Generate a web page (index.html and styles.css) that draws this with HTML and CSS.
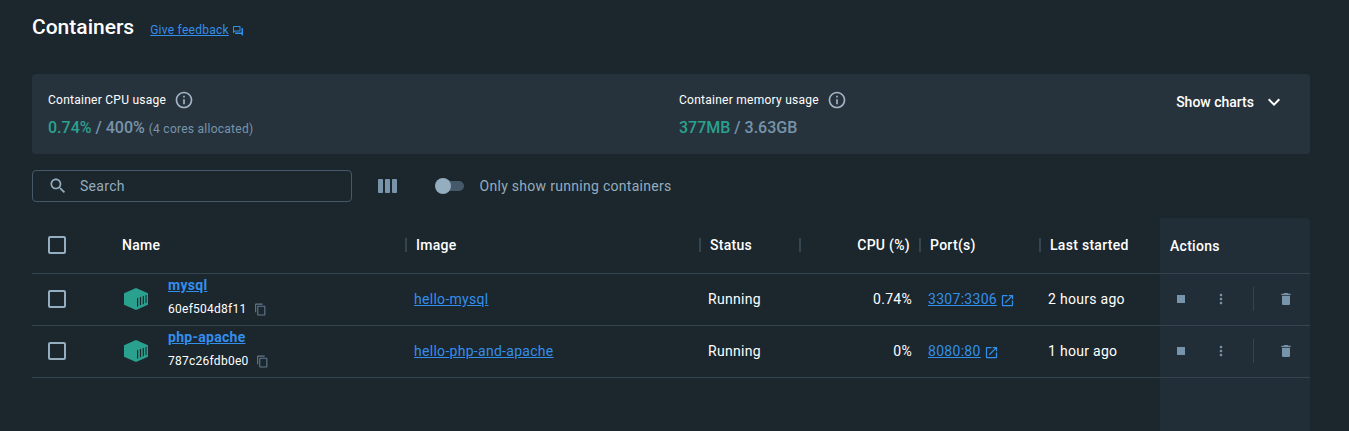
FILE: index.html
```
<!DOCTYPE html>
<html lang="en">
<head>
<meta charset="utf-8">
<title>Containers</title>
<link rel="stylesheet" href="styles.css">
</head>
<body>
<svg class="defs" width="0" height="0" aria-hidden="true">
  <symbol id="info" viewBox="0 0 24 24"><path d="M11 7h2v2h-2zm0 4h2v6h-2zm1-9C6.480 2 2 6.480 2 12s4.480 10 10 10 10-4.480 10-10S17.520 2 12 2zm0 18c-4.410 0-8-3.590-8-8s3.590-8 8-8 8 3.590 8 8-3.590 8-8 8z"/></symbol>
  <symbol id="copy" viewBox="0 0 24 24"><path d="M16 1H4c-1.100 0-2 .9-2 2v14h2V3h12V1zm3 4H8c-1.100 0-2 .9-2 2v14c0 1.100.9 2 2 2h11c1.100 0 2-.9 2-2V7c0-1.100-.9-2-2-2zm0 16H8V7h11v14z"/></symbol>
  <symbol id="open" viewBox="0 0 24 24"><path d="M19 19H5V5h7V3H5c-1.110 0-2 .9-2 2v14c0 1.100.89 2 2 2h14c1.100 0 2-.9 2-2v-7h-2v7zM14 3v2h3.590l-9.830 9.830 1.410 1.410L19 6.410V10h2V3h-7z"/></symbol>
  <symbol id="trash" viewBox="0 0 24 24"><path d="M6 19c0 1.100.9 2 2 2h8c1.100 0 2-.9 2-2V7H6v12zM19 4h-3.500l-1-1h-5l-1 1H5v2h14V4z"/></symbol>
  <symbol id="more" viewBox="0 0 24 24"><path d="M12 8c1.100 0 2-.9 2-2s-.9-2-2-2-2 .9-2 2 .9 2 2 2zm0 2c-1.100 0-2 .9-2 2s.9 2 2 2 2-.9 2-2-.9-2-2-2zm0 6c-1.100 0-2 .9-2 2s.9 2 2 2 2-.9 2-2-.9-2-2-2z"/></symbol>
  <symbol id="box" viewBox="0 0 24 22"><path fill="#2aa18f" d="M12 0l12 5.200v11.600L12 22 0 16.800V5.200z"/><path fill="#1c262d" d="M13 10.200l1.200-.4v8.400l-1.200.5zM15.900 9.200l1.200-.4v8.300l-1.200.5zM18.700 8.200l1.200-.4v8.100l-1.200.5zM21.500 7.200l1.100-.4v7.900l-1.100.5z"/></symbol>
</svg>

<header class="page-head">
  <h1>Containers</h1>
  <a class="feedback">Give feedback</a>
  <svg class="chat" viewBox="0 0 24 24"><path d="M15 4v7H5.170L4 12.170V4h11m1-2H3c-.55 0-1 .45-1 1v14l4-4h10c.55 0 1-.45 1-1V3c0-.55-.45-1-1-1zm5 4h-2v9H6v2c0 .55.45 1 1 1h11l4 4V7c0-.55-.45-1-1-1z"/></svg>
</header>

<section class="usage">
  <div class="stat cpu">
    <div class="label"><span>Container CPU usage</span><svg><use href="#info"/></svg></div>
    <div class="value"><b>0.74%</b> / 400% <small>(4 cores allocated)</small></div>
  </div>
  <div class="stat">
    <div class="label"><span>Container memory usage</span><svg><use href="#info"/></svg></div>
    <div class="value"><b>377MB</b> / 3.63GB</div>
  </div>
  <div class="charts"><span>Show charts</span><svg viewBox="0 0 24 24"><path d="M7.410 8.590L12 13.170l4.590-4.580L18 10l-6 6-6-6z"/></svg></div>
</section>

<div class="toolbar">
  <div class="search">
    <svg viewBox="0 0 24 24"><path d="M15.500 14h-.79l-.28-.27C15.410 12.590 16 11.110 16 9.500 16 5.910 13.090 3 9.500 3S3 5.910 3 9.500 5.910 16 9.500 16c1.610 0 3.090-.59 4.230-1.570l.27.28v.79l5 4.990L20.490 19l-4.990-5zm-6 0C7.010 14 5 11.990 5 9.500S7.010 5 9.500 5 14 7.010 14 9.500 11.990 14 9.500 14z"/></svg>
    <span>Search</span>
  </div>
  <div class="columns"><i></i><i></i><i></i></div>
  <div class="switch"><i></i></div>
  <span class="only">Only show running containers</span>
</div>

<div class="table">
  <div class="row head">
    <div class="check"><i></i></div>
    <div class="h name-h">Name</div>
    <div class="h">Image</div>
    <div class="h">Status</div>
    <div class="h right">CPU (%)</div>
    <div class="h">Port(s)</div>
    <div class="h">Last started</div>
    <div class="actions actions-h">Actions</div>
  </div>
  <div class="row">
    <div class="check"><i></i></div>
    <div class="name"><svg class="box"><use href="#box"/></svg><div class="ident"><a>mysql</a><div class="id">60ef504d8f11<svg><use href="#copy"/></svg></div></div></div>
    <div class="cell"><a>hello-mysql</a></div>
    <div class="cell">Running</div>
    <div class="cell right">0.74%</div>
    <div class="cell"><a>3307:3306</a><svg class="open"><use href="#open"/></svg></div>
    <div class="cell">2 hours ago</div>
    <div class="actions"><i class="stop"></i><svg class="more"><use href="#more"/></svg><i class="rule"></i><svg class="trash"><use href="#trash"/></svg></div>
  </div>
  <div class="row">
    <div class="check"><i></i></div>
    <div class="name"><svg class="box"><use href="#box"/></svg><div class="ident"><a>php-apache</a><div class="id">787c26fdb0e0<svg><use href="#copy"/></svg></div></div></div>
    <div class="cell"><a>hello-php-and-apache</a></div>
    <div class="cell">Running</div>
    <div class="cell right">0%</div>
    <div class="cell"><a>8080:80</a><svg class="open"><use href="#open"/></svg></div>
    <div class="cell">1 hour ago</div>
    <div class="actions"><i class="stop"></i><svg class="more"><use href="#more"/></svg><i class="rule"></i><svg class="trash"><use href="#trash"/></svg></div>
  </div>
  <div class="row rest"><div class="actions"></div></div>
</div>
</body>
</html>
```
FILE: styles.css
```
* { box-sizing: border-box; }
body {
  margin: 0;
  height: 431px;
  overflow: hidden;
  padding: 0 39px 0 32px;
  background: #1c262d;
  color: #fff;
  font: 14px/20px Roboto, sans-serif;
  letter-spacing: 0.29px;
}
svg { display: block; flex: none; fill: currentColor; }
.defs { position: absolute; }
a { color: #338fec; text-decoration: underline; }

.page-head { display: flex; align-items: center; height: 74px; padding-bottom: 20px; }
h1 { margin: 0; font-size: 21px; line-height: 24px; font-weight: 500; letter-spacing: 0; }
.feedback { margin: 6px 0 0 16px; font-size: 12px; letter-spacing: 0.26px; }
.chat { width: 12px; height: 12px; margin: 8px 0 0 3px; color: #338fec; }

.usage { display: flex; height: 80px; padding: 16px; border-radius: 4px; background: #27333c; }
.stat.cpu { width: 631px; }
.label { display: flex; align-items: center; height: 20px; font-size: 12px; letter-spacing: 0.26px; }
.label svg { width: 20px; height: 20px; margin-left: 8px; color: #a3b5c4; }
.value { margin-top: 7px; font-size: 16px; line-height: 22px; font-weight: 500; letter-spacing: 0; color: #7794ab; }
.value b { font-weight: 500; color: #2aa18f; }
.value small { font-size: 12px; font-weight: 400; letter-spacing: 0.26px; }
.charts { display: flex; align-items: center; height: 24px; margin-left: auto; font-weight: 500; letter-spacing: 0; }
.charts svg { width: 24px; height: 24px; margin: 0 8px; }

.toolbar { display: flex; align-items: center; margin-top: 16px; height: 32px; color: #94adbf; }
.search { display: flex; align-items: center; width: 320px; height: 32px; padding-left: 15px; border: 1px solid #46596a; border-radius: 4px; }
.search svg { width: 20px; height: 20px; margin-right: 12px; }
.columns { display: flex; gap: 2px; margin-left: 26px; }
.columns i { width: 5px; height: 14px; border-radius: 1px; background: #7794ab; }
.switch { width: 25px; height: 10px; margin-left: 42px; border-radius: 5px; background: #46596a; display: flex; align-items: center; }
.switch i { flex: none; width: 16px; height: 16px; margin-left: -4px; border-radius: 50%; background: #94adbf; }
.only { margin-left: 15.5px; }

.table { margin-top: 16px; }
.row { display: grid; grid-template-columns: 80px 294px 294px 100px 120px 120px 120px 150px; height: 52px; border-bottom: 1px solid #34454f; }
.row.head { height: 56px; }
.row.rest { height: 60px; border: 0; }
.rest .actions { grid-column: 8; }
.check { display: flex; align-items: center; padding: 0 0 1px 16px; }
.check i { width: 18px; height: 18px; border: 2px solid #94adbf; border-radius: 2px; }
.h { display: flex; align-items: center; padding: 0 10px 2px 9px; font-weight: 500; }
.h::before { content: ""; width: 2px; height: 14px; margin-left: -10px; margin-right: 9px; background: #34454f; }
.name-h { padding-left: 10px; }
.name-h::before { display: none; }
.h.right::before { margin-right: auto; }
.cell { display: flex; align-items: center; padding: 0 8px 1px; }
.cell.right { justify-content: flex-end; }
.open { width: 15px; height: 15px; margin: 3px 0 0 3px; color: #338fec; }
.name { display: flex; align-items: center; padding: 0 0 1px 12px; }
.name a { display: block; width: max-content; font-weight: 700; }
.ident { padding-bottom: 4px; }
.box { width: 24px; height: 22px; margin-right: 20px; }
.id { display: flex; align-items: center; height: 20px; margin-top: 4px; font-size: 12px; letter-spacing: 0.26px; }
.id svg { width: 13px; height: 13px; margin-left: 7.5px; color: #627a8e; }
.actions { display: flex; align-items: center; padding-bottom: 1px; background: #222e37; }
.actions-h { padding: 0 0 0 10px; font-weight: 500; border-top-right-radius: 4px; }
.stop { width: 8px; height: 8px; margin-left: 17px; background: #7794ab; }
.more { width: 16px; height: 16px; margin-left: 28px; color: #7794ab; }
.rule { width: 1px; height: 24px; margin-left: 24px; background: #34454f; }
.trash { width: 16px; height: 16px; margin-left: 24px; color: #7794ab; }
```
